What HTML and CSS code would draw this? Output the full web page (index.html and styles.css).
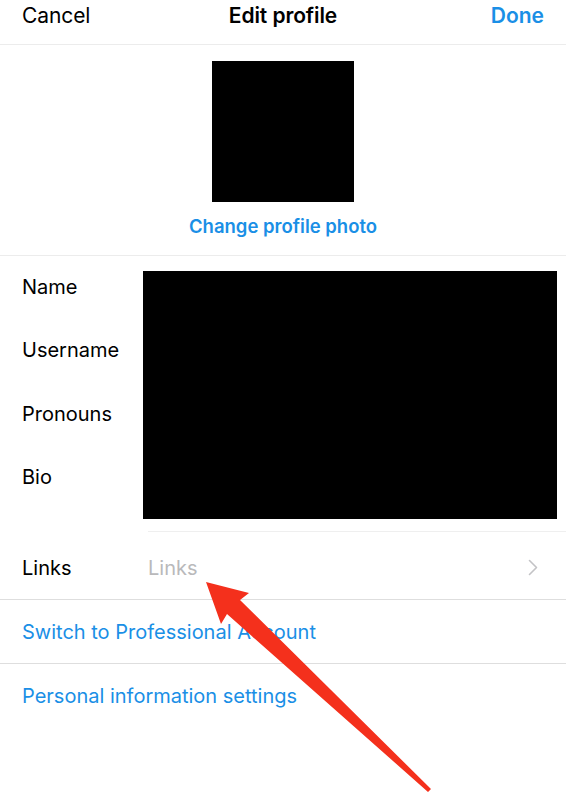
FILE: index.html
```html
<!DOCTYPE html>
<html lang="en">
<head>
<meta charset="utf-8">
<title>Edit profile</title>
<link rel="stylesheet" href="styles.css">
</head>
<body>
<div class="page">
  <header class="topbar">
    <span class="cancel">Cancel</span>
    <span class="title">Edit profile</span>
    <span class="done">Done</span>
  </header>

  <section class="photo">
    <div class="avatar"></div>
    <div class="change">Change profile photo</div>
  </section>

  <section class="fields">
    <div class="labels">
      <div class="label">Name</div>
      <div class="label">Username</div>
      <div class="label">Pronouns</div>
      <div class="label">Bio</div>
    </div>
    <div class="redacted"></div>
  </section>

  <div class="inset-rule"></div>

  <div class="row links-row">
    <span class="label-inline">Links</span>
    <span class="placeholder">Links</span>
    <svg class="chevron" width="10" height="17" viewBox="0 0 10 17"><polyline points="1.5,1.5 8.5,8.5 1.5,15.5" fill="none" stroke="#c3c3c6" stroke-width="1.6" stroke-linecap="round" stroke-linejoin="round"/></svg>
  </div>

  <div class="row action">Switch to Professional Account</div>
  <div class="row action last">Personal information settings</div>

  <svg class="arrow" width="566" height="800" viewBox="0 0 566 800">
    <polygon points="206,582 249,593 240,600 431,789 428,792 227,614 221,624" fill="#f4301c"/>
  </svg>
</div>
</body>
</html>
```

FILE: styles.css
```css
* { box-sizing: border-box; }

html, body {
  margin: 0;
  padding: 0;
  background: #ffffff;
}

body {
  font-family: Inter, "Noto Sans", "Liberation Sans", sans-serif;
  color: #000;
  -webkit-font-smoothing: antialiased;
}

.page {
  position: relative;
  width: 566px;
  height: 800px;
  overflow: hidden;
}

.topbar {
  height: 45px;
  display: grid;
  grid-template-columns: 1fr auto 1fr;
  align-items: start;
  padding: 0 22px;
  border-bottom: 1px solid #ececec;
  font-size: 21px;
  line-height: 32px;
}

.cancel { justify-self: start; letter-spacing: -0.1px; }
.title { font-weight: 600; letter-spacing: -0.1px; }
.done { justify-self: end; color: #1a8fe6; font-weight: 600; }

.photo {
  display: flex;
  flex-direction: column;
  align-items: center;
  padding-top: 16px;
  height: 211px;
  border-bottom: 1px solid #ececec;
}

.avatar {
  width: 142px;
  height: 141px;
  background: #000;
}

.change {
  margin-top: 12px;
  color: #1a8fe6;
  font-size: 18.5px;
  font-weight: 600;
  line-height: 24px;
}

.fields {
  display: flex;
  height: 275px;
}

.labels {
  width: 143px;
  padding-left: 22px;
  display: flex;
  flex-direction: column;
}

.label {
  height: 63.3px;
  line-height: 63px;
  font-size: 20px;
}

.redacted {
  margin-top: 15px;
  width: 414px;
  height: 248px;
  background: #000;
}

.inset-rule {
  margin-left: 148px;
  border-top: 1px solid #efefef;
}

.row {
  display: flex;
  align-items: center;
  padding: 0 22px;
  font-size: 20px;
  border-bottom: 1px solid #dedede;
}

.links-row {
  height: 68px;
  padding-top: 4px;
}

.label-inline { width: 126px; }

.placeholder {
  flex: 1;
  color: #b9b9bb;
}

.chevron { margin-right: 6px; }

.action {
  height: 64px;
  color: #1a8fe6;
}

.action.last { border-bottom: none; }

.arrow {
  position: absolute;
  left: 0;
  top: 0;
  pointer-events: none;
}
```
